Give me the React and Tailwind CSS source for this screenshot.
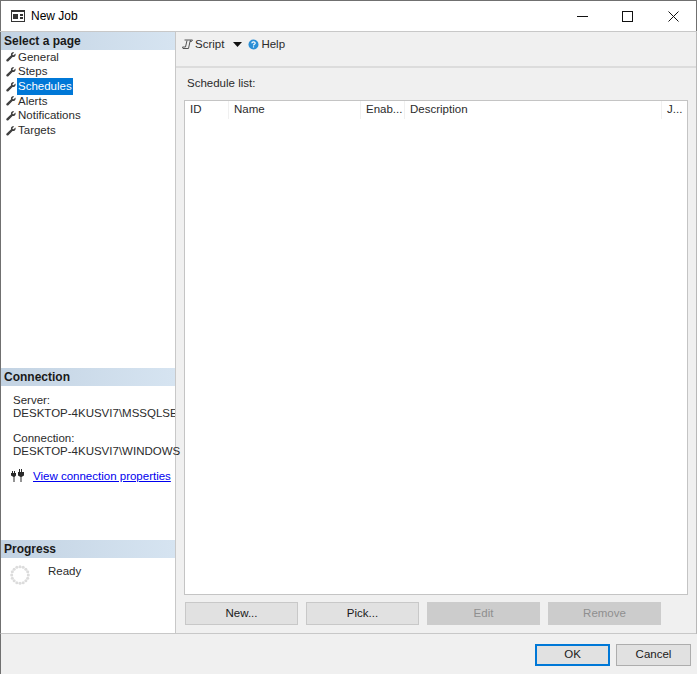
import React from "react";

const Wrench = () => (
  <svg width="10" height="10" viewBox="0 0 10 10" className="shrink-0">
    <path d="M9.5 1.6 7.6 3.3 6.7 3 6.4 2.2 8.2.5C6.9-.1 5.3.4 5 1.8c-.1.6 0 1.1.1 1.5L.6 7.4c-.6.6-.4 1.400.1 1.900.5.400 1.200.400 1.700-.1L6.500 4.900c.5.100 1.100.200 1.600 0C9.300 4.500 9.900 3 9.500 1.600Z" fill="#404040" />
  </svg>
);

const pages = ["General", "Steps", "Schedules", "Alerts", "Notifications", "Targets"];

const SectionHeader = ({ children }) => (
  <div className="h-[18px] shrink-0 bg-gradient-to-r from-[#c3d3e3] to-[#d6e4f1] pl-[3px] text-[12px] leading-[18px] font-bold text-[#1a1a1a]">
    {children}
  </div>
);

const Btn = ({ children, disabled }) => (
  <div
    className={
      disabled
        ? "flex h-[23px] w-[113px] items-center justify-center border border-[#cccccc] bg-[#cccccc] text-[#8f8f8f]"
        : "flex h-[23px] w-[113px] items-center justify-center border border-[#c8c8c8] bg-[#e1e1e1] text-[#1a1a1a]"
    }
  >
    {children}
  </div>
);

const Col = ({ w, children, last }) => (
  <div className={`${w} flex h-[18px] shrink-0 items-center pl-[5px] ${last ? "" : "border-r border-[#f0f0f0]"}`}>
    {children}
  </div>
);

const Spinner = () => {
  const dots = Array.from({ length: 16 }, (_, i) => (i * Math.PI) / 8);
  return (
    <svg width="20" height="20" viewBox="0 0 20 20">
      {dots.map((a, i) => (
        <circle key={i} cx={10 + 8.300 * Math.cos(a)} cy={10 + 8.300 * Math.sin(a)} r="1.500" fill="#dcdcdc" />
      ))}
    </svg>
  );
};

export default function App() {
  return (
    <div
      className="flex h-[674px] w-[697px] flex-col overflow-hidden bg-[#f0f0f0] text-[11.500px] text-[#2b2b2b]"
      style={{ fontFamily: '"Liberation Sans", Arial, sans-serif' }}
    >
      {/* title bar */}
      <div className="flex h-[31px] shrink-0 items-center border-t border-r border-l border-t-[#707070] border-r-[#707070] border-l-[#707070] border-b-0 bg-white">
        <svg width="14" height="12" viewBox="0 0 14 12" className="ml-[10px] shrink-0">
          <rect x="0.500" y="0.500" width="13" height="11" fill="#fff" stroke="#333" />
          <rect x="0" y="0" width="14" height="2" fill="#333" />
          <rect x="2" y="4" width="5" height="5" fill="#333" />
          <rect x="9" y="4" width="3" height="2" fill="#333" />
          <rect x="9" y="7" width="3" height="2" fill="#333" />
        </svg>
        <span className="ml-[6px] text-[12px] text-black">New Job</span>
        <div className="ml-auto flex items-center pr-[17px]">
          <svg width="11" height="11" viewBox="0 0 11 11" className="mr-[34px]">
            <path d="M0 5.500H11" stroke="#111" />
          </svg>
          <svg width="11" height="11" viewBox="0 0 11 11" className="mr-[35px]">
            <rect x="0.500" y="0.500" width="10" height="10" fill="none" stroke="#111" />
          </svg>
          <svg width="11" height="11" viewBox="0 0 11 11">
            <path d="M.5.500 10.500 10.500M10.500.500.500 10.500" stroke="#111" />
          </svg>
        </div>
      </div>

      {/* body */}
      <div className="flex h-[603px] shrink-0 border-t border-[#c8c8c8]">
        {/* sidebar */}
        <div className="flex w-[176px] shrink-0 flex-col border-r border-b border-l border-r-[#c8c8c8] border-b-[#c8c8c8] border-l-[#707070] bg-white">
          <SectionHeader>Select a page</SectionHeader>
          <div className="flex h-[318px] shrink-0 flex-col pl-[5px] pt-0">
            {pages.map((p) => (
              <div key={p} className="flex h-[14.700px] items-center gap-[1px]">
                <Wrench />
                <span className={p === "Schedules" ? "bg-[#0078d7] px-[1px] text-white" : "px-[1px]"}>{p}</span>
              </div>
            ))}
          </div>
          <SectionHeader>Connection</SectionHeader>
          <div className="flex h-[154px] shrink-0 flex-col pl-[12px] pt-[8px] leading-[13px]">
            <div>Server:</div>
            <div className="w-[162px] overflow-hidden whitespace-nowrap">DESKTOP-4KUSVI7\MSSQLSERVER</div>
            <div className="mt-[12px]">Connection:</div>
            <div className="whitespace-nowrap">DESKTOP-4KUSVI7\WINDOWS</div>
            <div className="mt-[11px] flex items-center">
              <svg width="14" height="14" viewBox="0 0 14 14" className="-ml-[2px] mr-[8px] shrink-0">
                <path d="M0 4h1V2h1v2h1V2h1v2h1v2.500L3.500 8v5h-1V8L0 6.500ZM7 3h1V0h1v3h1V0h1v3h2v3.500L10.500 8v5h-1V8L7 6.500Z" fill="#2a2a2a" />
              </svg>
              <span className="text-[#0000ee] underline">View connection properties</span>
            </div>
          </div>
          <SectionHeader>Progress</SectionHeader>
          <div className="flex flex-1 items-start pl-[9px] pt-[7px]">
            <Spinner />
            <span className="ml-[18px] leading-[13px]">Ready</span>
          </div>
        </div>

        {/* main */}
        <div className="flex min-w-0 flex-1 flex-col border-r border-[#b8b8b8]">
          <div className="flex h-[36px] shrink-0 items-start border-b-2 border-[#dcdcdc] pl-[6px] pt-[6px] leading-[13px]">
            <svg width="11" height="11" viewBox="0 0 11 11" className="mt-[1px] shrink-0">
              <path d="M2.500 1H10.500L9.500 2.500H8L6.500 9.500H1L.5 8H3.500L5 1.500M8.500 1 8 2.500" fill="none" stroke="#555" />
            </svg>
            <span className="ml-[2px]">Script</span>
            <svg width="9" height="5" viewBox="0 0 9 5" className="ml-[9px] mt-[4px]">
              <path d="M0 0H9L4.500 5Z" fill="#111" />
            </svg>
            <svg width="11" height="11" viewBox="0 0 11 11" className="ml-[6px] mt-[1px]">
              <circle cx="5.500" cy="5.500" r="5" fill="#2b8fd6" />
              <path d="M3.800 4.200C3.900 2.400 7.300 2.500 7.200 4.300 7.100 5.300 5.500 5.400 5.500 6.500" fill="none" stroke="#fff" strokeWidth="1.200" />
              <rect x="4.900" y="7.300" width="1.200" height="1.200" fill="#fff" />
            </svg>
            <span className="ml-[2px]">Help</span>
          </div>
          <div className="flex min-h-0 flex-1 flex-col border-b border-[#c8c8c8] px-[8px]">
            <div className="h-[32px] shrink-0 pl-[3px] pt-[9px] leading-[13px]">Schedule list:</div>
            <div className="flex h-[495px] shrink-0 flex-col border border-[#c4c4c4] bg-white">
              <div className="flex h-[18px] shrink-0">
                <Col w="w-[44px]">ID</Col>
                <Col w="w-[132px]">Name</Col>
                <Col w="w-[44px]">Enab...</Col>
                <Col w="w-[257px]">Description</Col>
                <Col w="w-[24px]" last>J...</Col>
              </div>
            </div>
            <div className="mt-[7px] flex gap-[8px] pl-[1px]">
              <Btn>New...</Btn>
              <Btn>Pick...</Btn>
              <Btn disabled>Edit</Btn>
              <Btn disabled>Remove</Btn>
            </div>
          </div>
        </div>
      </div>

      {/* footer */}
      <div className="flex flex-1 items-start justify-end gap-[6px] border-l border-[#707070] pr-[6px] pt-[10px]">
        <div className="flex h-[22px] w-[75px] items-center justify-center border-2 border-[#0078d7] bg-[#e1e1e1] text-[#1a1a1a]">OK</div>
        <div className="flex h-[22px] w-[75px] items-center justify-center border border-[#adadad] bg-[#e1e1e1] text-[#1a1a1a]">Cancel</div>
      </div>
    </div>
  );
}
